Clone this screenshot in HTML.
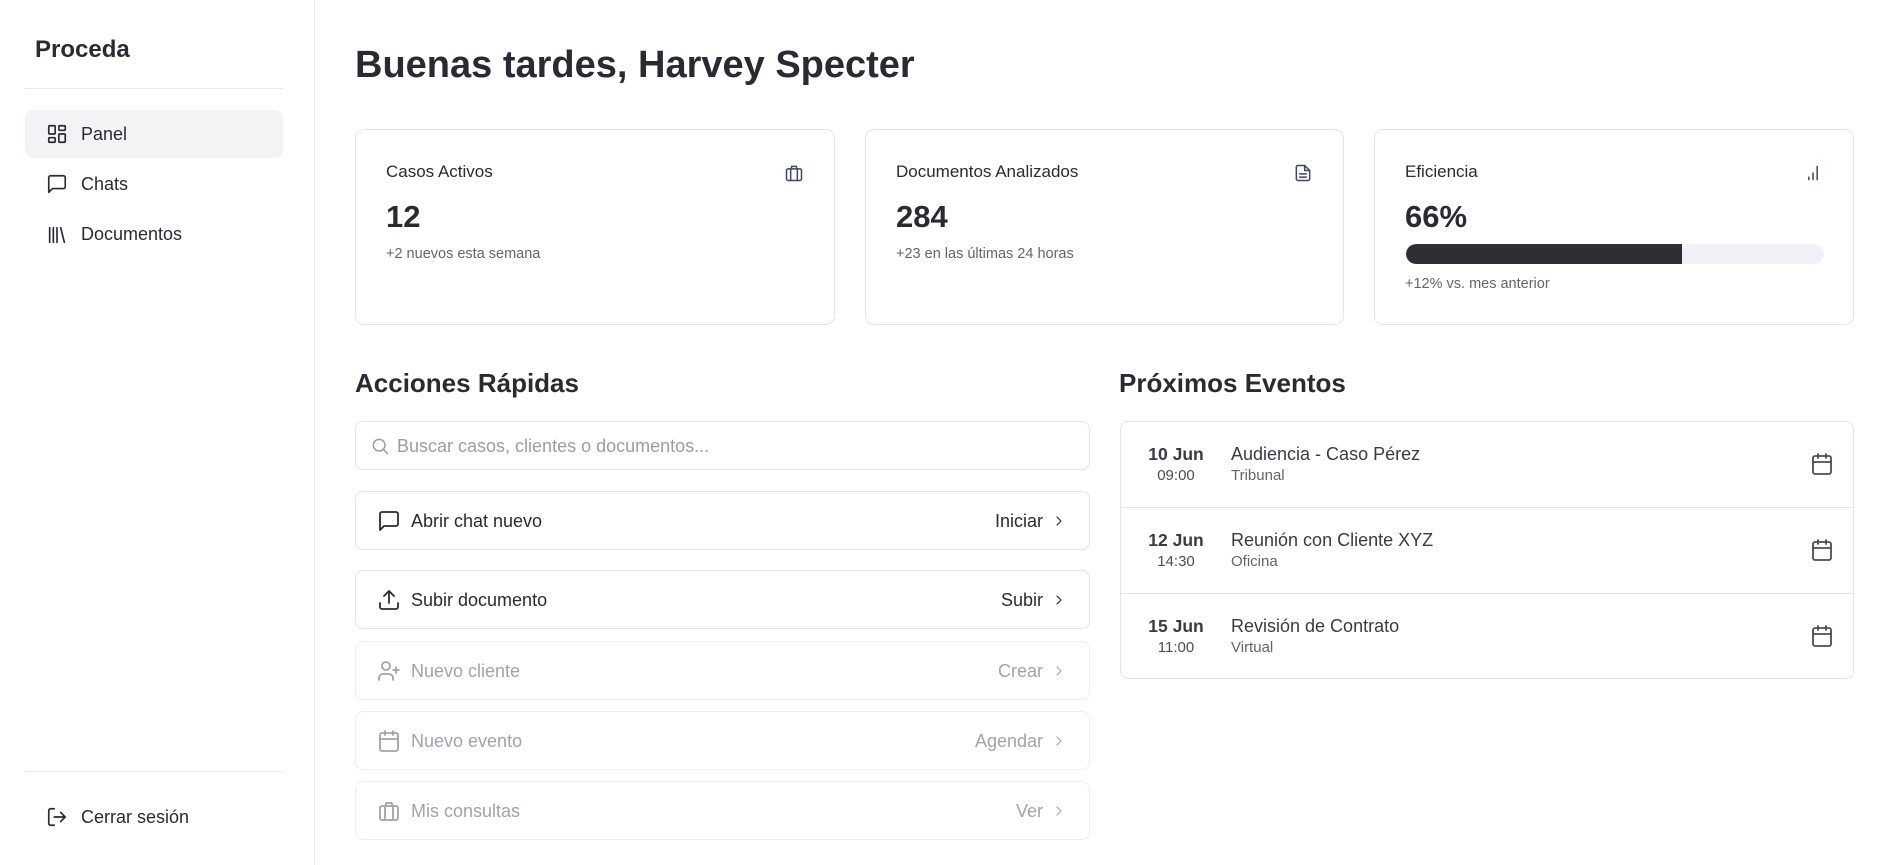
<!DOCTYPE html>
<html><head><meta charset="utf-8"><style>
*{box-sizing:border-box;margin:0;padding:0}
body{width:1887px;height:865px;background:#fff;font-family:"Liberation Sans",sans-serif;color:#2a2b32;position:relative;overflow:hidden}
.a{position:absolute}
svg{fill:none;stroke:currentColor;stroke-width:1.8;stroke-linecap:round;stroke-linejoin:round}
.card{position:absolute;border:1px solid #e3e5ea;border-radius:9px;background:#fff}
.lbl{position:absolute;left:30px;top:32px;font-size:17px;color:#2a2b32}
.num{position:absolute;left:30px;top:69px;font-size:31px;font-weight:700;color:#2a2b32}
.sub{position:absolute;left:30px;font-size:14.5px;color:#62656d}
.row{position:absolute;left:355px;width:735px;height:59px;border:1px solid #e3e5ea;border-radius:8px}
.row .ic{position:absolute;left:21px;top:17px;width:24px;height:24px}
.row .t{position:absolute;left:55px;top:19px;font-size:18px}
.row .r{position:absolute;right:46px;top:19px;font-size:18px}
.row .ch{position:absolute;right:22px;top:21px;width:16px;height:16px}
.dis{color:#a0a3aa}
.ev{position:absolute;left:0;width:733px;height:86px}
.ev .d{position:absolute;left:20px;width:70px;text-align:center;top:22px;font-size:17.5px;font-weight:600;color:#3a3b42}
.ev .tm{position:absolute;left:20px;width:70px;text-align:center;top:45px;font-size:15px;color:#4a4d55}
.ev .ti{position:absolute;left:110px;top:22px;font-size:18px;color:#3a3b42}
.ev .pl{position:absolute;left:110px;top:45px;font-size:15px;color:#62656d}
.ev svg{position:absolute;right:20px;top:30px;width:24px;height:24px;color:#4a4d55}
</style></head><body>
<!-- sidebar -->
<div class="a" style="left:314px;top:0;width:1px;height:865px;background:#e8e9ec"></div>
<div class="a" style="left:35px;top:36px;font-size:24px;font-weight:700">Proceda</div>
<div class="a" style="left:25px;top:88px;width:258px;height:1px;background:#e5e7eb"></div>
<div class="a" style="left:25px;top:110px;width:258px;height:48px;background:#f2f3f5;border-radius:8px"></div>
<svg class="a" style="left:46px;top:123px;width:22px;height:22px" viewBox="0 0 24 24"><rect x="3" y="3" width="7" height="9" rx="1"/><rect x="14" y="3" width="7" height="5" rx="1"/><rect x="14" y="12" width="7" height="9" rx="1"/><rect x="3" y="16" width="7" height="5" rx="1"/></svg>
<div class="a" style="left:81px;top:124px;font-size:18px">Panel</div>
<svg class="a" style="left:46px;top:173px;width:22px;height:22px" viewBox="0 0 24 24"><path d="M21 15a2 2 0 0 1-2 2H7l-4 4V5a2 2 0 0 1 2-2h14a2 2 0 0 1 2 2z"/></svg>
<div class="a" style="left:81px;top:174px;font-size:18px">Chats</div>
<svg class="a" style="left:46px;top:224px;width:22px;height:22px" viewBox="0 0 24 24"><path d="M4 4v16M8 4v16M12 4v16M16 4l4 16"/></svg>
<div class="a" style="left:81px;top:224px;font-size:18px">Documentos</div>
<div class="a" style="left:25px;top:771px;width:258px;height:1px;background:#e5e7eb"></div>
<svg class="a" style="left:46px;top:806px;width:22px;height:22px" viewBox="0 0 24 24"><path d="M9 21H5a2 2 0 0 1-2-2V5a2 2 0 0 1 2-2h4M16 17l5-5-5-5M21 12H9"/></svg>
<div class="a" style="left:81px;top:807px;font-size:18px">Cerrar sesión</div>

<!-- main -->
<div class="a" style="left:355px;top:44px;font-size:38px;font-weight:700;color:#2a2b32">Buenas tardes, Harvey Specter</div>

<div class="card" style="left:355px;top:129px;width:480px;height:196px">
<div class="lbl">Casos Activos</div>
<svg class="a" style="right:30px;top:33px;width:20px;height:20px;color:#3d4766" viewBox="0 0 24 24"><rect x="3" y="7" width="18" height="14" rx="2"/><path d="M8 21V7M16 21V7M9 7V4h6v3"/></svg>
<div class="num">12</div>
<div class="sub" style="top:116px">+2 nuevos esta semana</div>
</div>
<div class="card" style="left:865px;top:129px;width:479px;height:196px">
<div class="lbl">Documentos Analizados</div>
<svg class="a" style="right:30px;top:33px;width:20px;height:20px;color:#3d4766" viewBox="0 0 24 24"><path d="M14 3H6a2 2 0 0 0-2 2v14a2 2 0 0 0 2 2h12a2 2 0 0 0 2-2V9z"/><path d="M14 3v6h6M8 13h8M8 17h8"/></svg>
<div class="num">284</div>
<div class="sub" style="top:116px">+23 en las últimas 24 horas</div>
</div>
<div class="card" style="left:1374px;top:129px;width:480px;height:196px">
<div class="lbl">Eficiencia</div>
<svg class="a" style="right:30px;top:33px;width:20px;height:20px;color:#3d4766" viewBox="0 0 24 24"><path d="M7 20v-3M12 20v-8M17 20V4"/></svg>
<div class="num">66%</div>
<div class="a" style="left:31px;top:114px;width:418px;height:20px;background:#f0f2f7;border-radius:10px;overflow:hidden"><div style="width:276px;height:20px;background:#2e2f35;border-radius:10px 0 0 10px"></div></div>
<div class="sub" style="top:146px">+12% vs. mes anterior</div>
</div>

<div class="a" style="left:355px;top:368px;font-size:26px;font-weight:700;color:#2a2b32">Acciones Rápidas</div>
<div class="a" style="left:1119px;top:368px;font-size:26px;font-weight:700;color:#2a2b32">Próximos Eventos</div>

<div class="row" style="top:421px;height:49px">
<svg class="a" style="left:14px;top:14px;width:20px;height:20px;color:#9a9da5" viewBox="0 0 24 24"><circle cx="11" cy="11" r="7"/><path d="M21 21l-5-5"/></svg>
<div class="a" style="left:41px;top:14px;font-size:18px;color:#9a9da5">Buscar casos, clientes o documentos...</div>
</div>

<div class="row" style="top:491px">
<svg class="ic" viewBox="0 0 24 24"><path d="M21 15a2 2 0 0 1-2 2H7l-4 4V5a2 2 0 0 1 2-2h14a2 2 0 0 1 2 2z"/></svg>
<div class="t">Abrir chat nuevo</div><div class="r">Iniciar</div>
<svg class="ch" viewBox="0 0 24 24"><path d="M9 6l6 6-6 6"/></svg>
</div>
<div class="row" style="top:570px">
<svg class="ic" viewBox="0 0 24 24"><path d="M21 15v4a2 2 0 0 1-2 2H5a2 2 0 0 1-2-2v-4M17 8l-5-5-5 5M12 3v12"/></svg>
<div class="t">Subir documento</div><div class="r">Subir</div>
<svg class="ch" viewBox="0 0 24 24"><path d="M9 6l6 6-6 6"/></svg>
</div>
<div class="row dis" style="top:641px;border-color:#eceef1">
<svg class="ic" viewBox="0 0 24 24"><path d="M16 21v-2a4 4 0 0 0-4-4H6a4 4 0 0 0-4 4v2"/><circle cx="9" cy="7" r="4"/><path d="M19 8v6M22 11h-6"/></svg>
<div class="t">Nuevo cliente</div><div class="r">Crear</div>
<svg class="ch" viewBox="0 0 24 24"><path d="M9 6l6 6-6 6"/></svg>
</div>
<div class="row dis" style="top:711px;border-color:#eceef1">
<svg class="ic" viewBox="0 0 24 24"><rect x="3" y="4" width="18" height="18" rx="2"/><path d="M16 2v4M8 2v4M3 10h18"/></svg>
<div class="t">Nuevo evento</div><div class="r">Agendar</div>
<svg class="ch" viewBox="0 0 24 24"><path d="M9 6l6 6-6 6"/></svg>
</div>
<div class="row dis" style="top:781px;border-color:#eceef1">
<svg class="ic" viewBox="0 0 24 24"><rect x="3" y="7" width="18" height="14" rx="2"/><path d="M8 21V7M16 21V7M9 7V4h6v3"/></svg>
<div class="t">Mis consultas</div><div class="r">Ver</div>
<svg class="ch" viewBox="0 0 24 24"><path d="M9 6l6 6-6 6"/></svg>
</div>

<div class="card" style="left:1120px;top:421px;width:734px;height:258px;border-radius:8px">
<div class="ev" style="top:0">
<div class="d">10 Jun</div><div class="tm">09:00</div><div class="ti">Audiencia - Caso Pérez</div><div class="pl">Tribunal</div>
<svg viewBox="0 0 24 24"><rect x="3" y="4" width="18" height="18" rx="2"/><path d="M16 2v4M8 2v4M3 10h18"/></svg>
</div>
<div class="a" style="left:0;top:85px;width:732px;height:1px;background:#e3e5ea"></div>
<div class="ev" style="top:86px">
<div class="d">12 Jun</div><div class="tm">14:30</div><div class="ti">Reunión con Cliente XYZ</div><div class="pl">Oficina</div>
<svg viewBox="0 0 24 24"><rect x="3" y="4" width="18" height="18" rx="2"/><path d="M16 2v4M8 2v4M3 10h18"/></svg>
</div>
<div class="a" style="left:0;top:171px;width:732px;height:1px;background:#e3e5ea"></div>
<div class="ev" style="top:172px">
<div class="d">15 Jun</div><div class="tm">11:00</div><div class="ti">Revisión de Contrato</div><div class="pl">Virtual</div>
<svg viewBox="0 0 24 24"><rect x="3" y="4" width="18" height="18" rx="2"/><path d="M16 2v4M8 2v4M3 10h18"/></svg>
</div>
</div>
</body></html>
